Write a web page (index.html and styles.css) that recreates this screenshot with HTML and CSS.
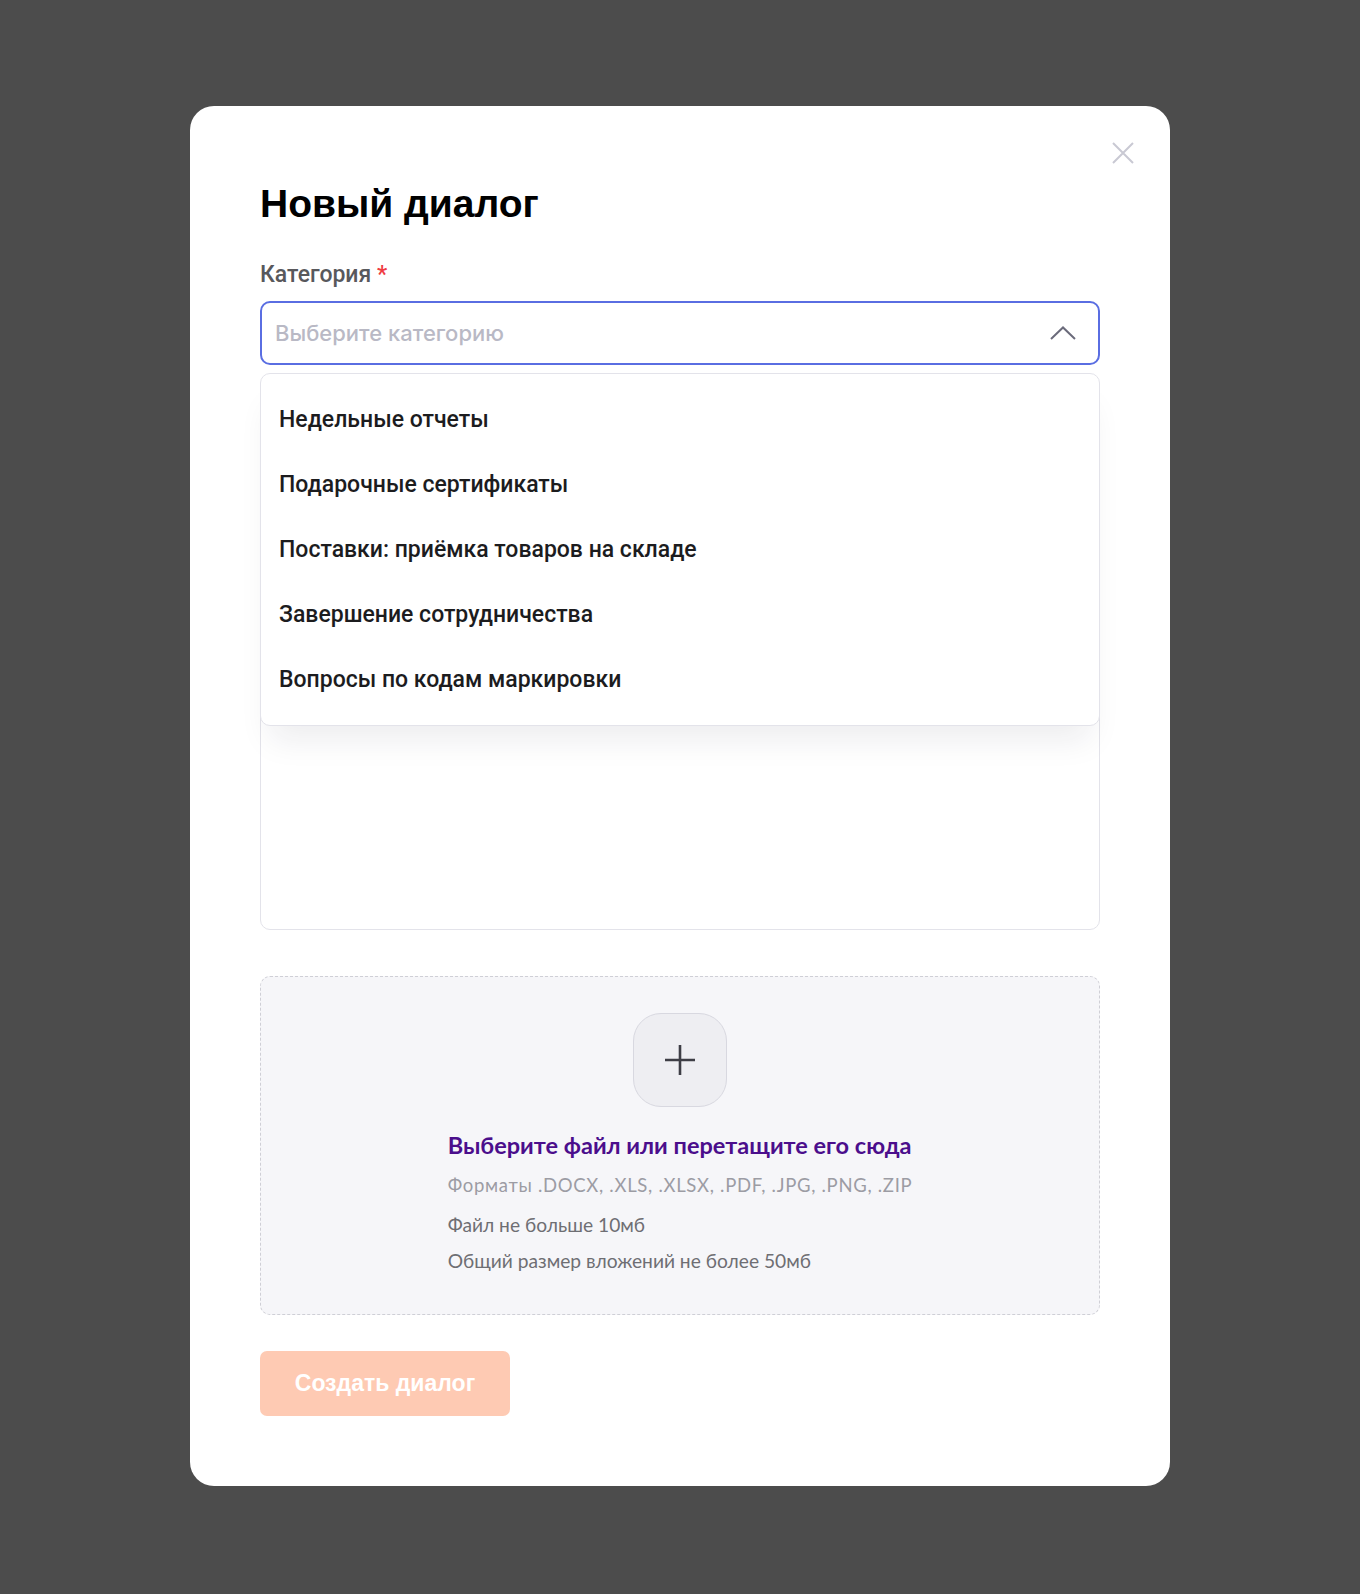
FILE: index.html
```html
<!DOCTYPE html>
<html lang="ru">
<head>
<meta charset="utf-8">
<title>Новый диалог</title>
<link rel="stylesheet" href="styles.css">
</head>
<body>
<div class="overlay">
  <div class="modal">
    <button class="close" aria-label="Закрыть">
      <svg width="22" height="22" viewBox="0 0 22 22"><path d="M1 1L21 21M21 1L1 21" stroke="#c9c9d3" stroke-width="2" fill="none"/></svg>
    </button>
    <h1 class="title">Новый диалог</h1>

    <div class="field">
      <div class="label">Категория <span class="req">*</span></div>
      <div class="select-wrap">
        <div class="select">
          <span class="placeholder">Выберите категорию</span>
          <svg class="chevron" width="26" height="14" viewBox="0 0 26 14"><path d="M1 13L13 1.5L25 13" stroke="#6b6b7b" stroke-width="2" fill="none"/></svg>
        </div>
        <ul class="dropdown">
          <li>Недельные отчеты</li>
          <li>Подарочные сертификаты</li>
          <li>Поставки: приёмка товаров на складе</li>
          <li>Завершение сотрудничества</li>
          <li>Вопросы по кодам маркировки</li>
        </ul>
      </div>
    </div>

    <div class="textarea"></div>

    <div class="upload">
      <div class="plus">
        <svg width="30" height="30" viewBox="0 0 30 30"><path d="M15 0V30M0 15H30" stroke="#3d3d45" stroke-width="2.6" fill="none"/></svg>
      </div>
      <div class="upload-text">
        <div class="upload-title">Выберите файл или перетащите его сюда</div>
        <div class="formats">Форматы .DOCX, .XLS, .XLSX, .PDF, .JPG, .PNG, .ZIP</div>
        <div class="limit limit-first">Файл не больше 10мб</div>
        <div class="limit">Общий размер вложений не более 50мб</div>
      </div>
    </div>

    <button class="submit">Создать диалог</button>
  </div>
</div>
</body>
</html>
```

FILE: styles.css
```css
* { box-sizing: border-box; }
html, body { margin: 0; padding: 0; }
body {
  background: #4c4c4c;
  min-height: 1594px;
  font-family: "Liberation Sans", Arial, sans-serif;
}
.overlay {
  display: flex;
  justify-content: center;
  padding-top: 106px;
}
.modal {
  position: relative;
  width: 980px;
  background: #fff;
  border-radius: 24px;
  padding: 75px 70px 70px;
}
.close {
  position: absolute;
  top: 36px;
  right: 36px;
  width: 22px;
  height: 22px;
  padding: 0;
  border: 0;
  background: none;
  display: block;
}
.close svg { display: block; }
.title {
  margin: 0;
  font-size: 39px;
  line-height: 46px;
  font-weight: 700;
  color: #000;
}
.field { margin-top: 35px; }
.label {
  font-family: Roboto, sans-serif;
  font-weight: 500;
  font-size: 23px;
  line-height: 26px;
  color: #58585c;
  margin-bottom: 13px;
}
.req { color: #ef3b42; }
.select-wrap { position: relative; }
.select {
  height: 64px;
  border: 2px solid #5a6ee2;
  border-radius: 10px;
  display: flex;
  align-items: center;
  justify-content: space-between;
  padding: 0 22px 0 13px;
}
.placeholder {
  font-family: Inter, sans-serif;
  font-weight: 500;
  font-size: 22px;
  color: #b9b9c5;
}
.chevron { display: block; }
.dropdown {
  position: absolute;
  top: calc(100% + 8px);
  left: 0;
  right: 0;
  z-index: 5;
  margin: 0;
  padding: 13px 0;
  list-style: none;
  background: #fff;
  border: 1px solid #e3e3ea;
  border-radius: 10px;
  box-shadow: 0 24px 30px -10px rgba(30, 30, 50, 0.08);
}
.dropdown li {
  height: 65px;
  display: flex;
  align-items: center;
  padding: 0 18px;
  font-family: Roboto, sans-serif;
  font-weight: 500;
  font-size: 23px;
  line-height: 27px;
  color: #1c1c1e;
}
.textarea {
  margin-top: 36px;
  height: 529px;
  border: 1px solid #e3e3ea;
  border-radius: 10px;
}
.upload {
  margin-top: 46px;
  height: 339px;
  background: #f6f6f9;
  border: 1px dashed #cfcfd6;
  border-radius: 10px;
  display: flex;
  flex-direction: column;
  align-items: center;
  padding-top: 36px;
}
.plus {
  width: 94px;
  height: 94px;
  border-radius: 28px;
  background: #eeeef2;
  border: 1px solid #d8d8e0;
  display: flex;
  align-items: center;
  justify-content: center;
}
.plus svg { display: block; }
.upload-text {
  margin-top: 24px;
  font-family: Lato, sans-serif;
}
.upload-title {
  font-size: 23.5px;
  line-height: 28px;
  font-weight: 700;
  color: #4b0e8c;
}
.formats {
  margin-top: 14px;
  font-size: 18.5px;
  line-height: 24px;
  letter-spacing: 0.7px;
  color: #9c9ca4;
}
.limit {
  font-size: 19.2px;
  line-height: 24px;
  color: #6e6e73;
  margin-top: 12px;
}
.limit-first { margin-top: 16px; }
.submit {
  display: block;
  margin-top: 36px;
  width: 250px;
  height: 65px;
  border: 0;
  border-radius: 7px;
  background: #fecab3;
  color: #fff;
  font-family: "Liberation Sans", Arial, sans-serif;
  font-size: 23px;
  font-weight: 700;
  padding: 0;
}
```
